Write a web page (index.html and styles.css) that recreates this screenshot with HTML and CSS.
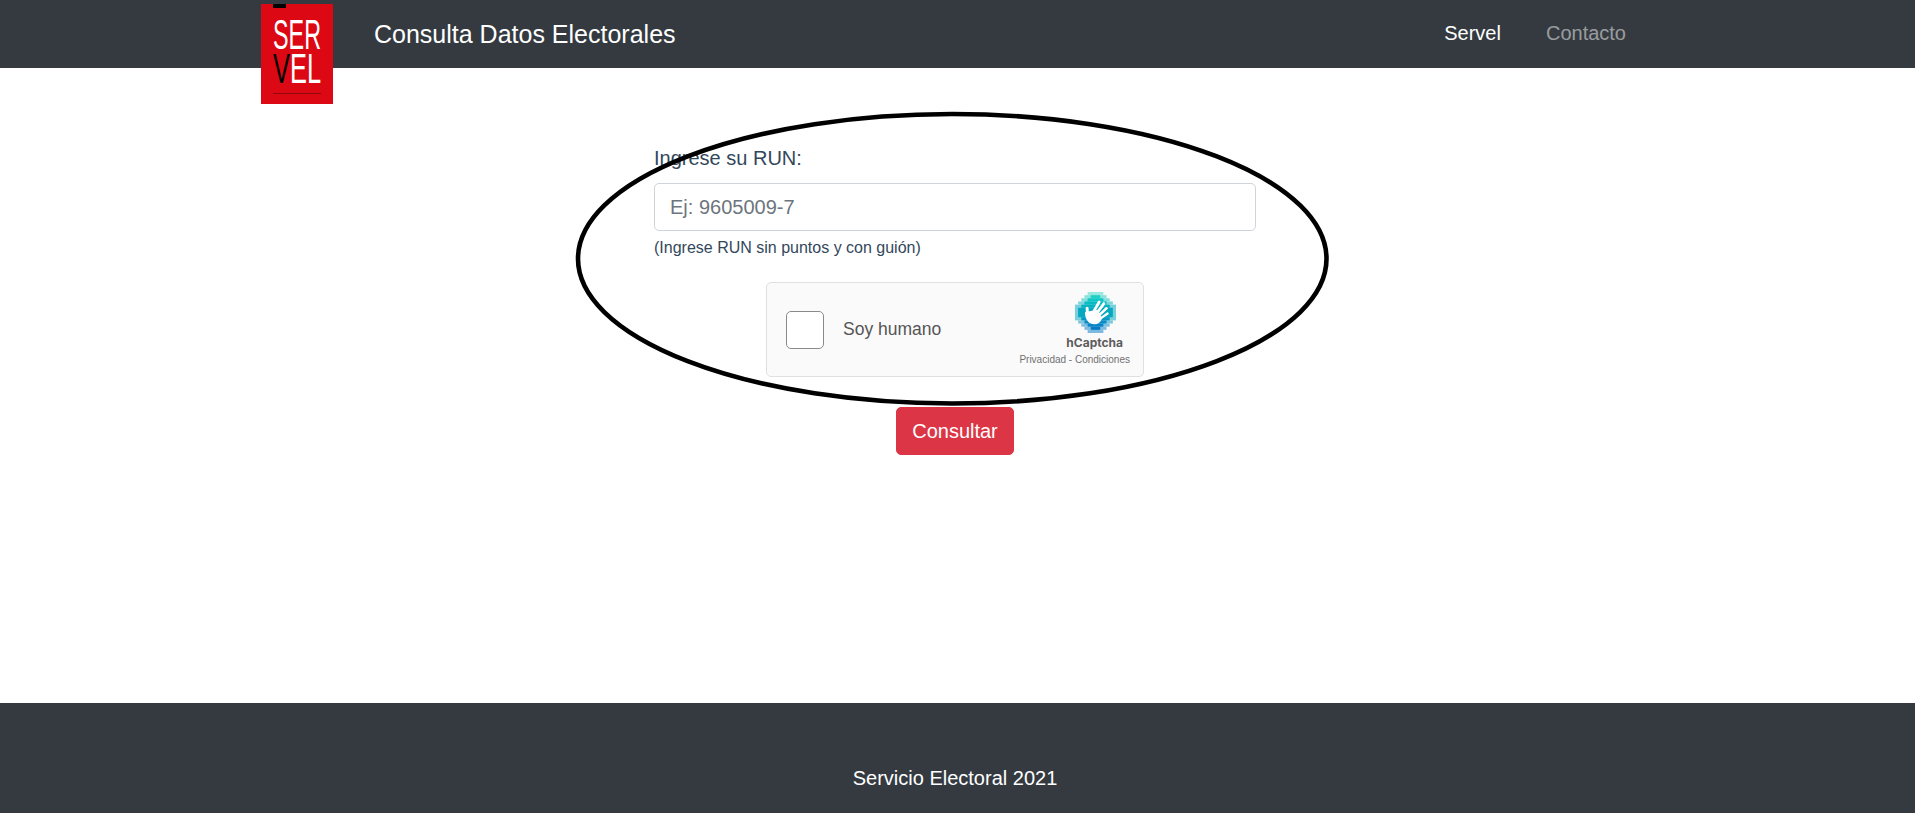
FILE: index.html
```html
<!DOCTYPE html>
<html lang="es">
<head>
  <meta charset="UTF-8">
  <title>Consulta Datos Electorales</title>
  <link rel="stylesheet" href="styles.css">
</head>
<body>
  <header class="navbar">
    <svg class="logo" viewBox="0 0 72 100" role="img" aria-label="Servel">
      <rect width="72" height="100" fill="#dc0814"/>
      <rect x="12" width="13" height="4" fill="#000"/>
      <text class="logo-text" transform="translate(12 45) scale(.543 1)" font-size="43" fill="#fff">SER</text>
      <text class="logo-text" transform="translate(12 79) scale(.605 1)" font-size="42" fill="#fff"><tspan fill="#000">V</tspan>EL</text>
      <rect x="12" y="89" width="48" height="1" fill="#8f0a10"/>
    </svg>
    <a class="brand" href="#">Consulta Datos Electorales</a>
    <nav class="nav-links">
      <a class="nav-link active" href="#">Servel</a>
      <a class="nav-link" href="#">Contacto</a>
    </nav>
  </header>

  <main class="content">
    <form class="run-form">
      <label class="run-label" for="run">Ingrese su RUN:</label>
      <input class="run-input" id="run" type="text" placeholder="Ej: 9605009-7">
      <small class="run-help">(Ingrese RUN sin puntos y con guión)</small>
      <div class="captcha">
        <span class="captcha-box"></span>
        <span class="captcha-label">Soy humano</span>
        <div class="captcha-brand">
          <svg class="captcha-logo" viewBox="0 0 39 39" aria-hidden="true">
            <g opacity=".55">
              <rect x="12" y="0" width="15" height="3" fill="#4fdcc8"/>
              <rect x="9" y="3" width="21" height="3" fill="#2fd0c4"/>
              <rect x="6" y="6" width="27" height="3" fill="#1cc6c4"/>
              <rect x="3" y="9" width="33" height="3" fill="#12bcc4"/>
              <rect x="0" y="12" width="39" height="15" fill="#10afc2"/>
              <rect x="3" y="27" width="33" height="3" fill="#1a9cc8"/>
              <rect x="6" y="30" width="27" height="3" fill="#1a90cc"/>
              <rect x="9" y="33" width="21" height="3" fill="#1a88cc"/>
              <rect x="12" y="36" width="15" height="3" fill="#1a84cc"/>
            </g>
            <rect x="15" y="3" width="9" height="3" fill="#1fd0c4"/>
            <rect x="12" y="6" width="15" height="3" fill="#10c6c4"/>
            <rect x="9" y="9" width="21" height="3" fill="#06bcc4"/>
            <rect x="6" y="12" width="27" height="3" fill="#04b2c2"/>
            <rect x="3" y="15" width="33" height="9" fill="#04a8c0"/>
            <rect x="6" y="24" width="27" height="3" fill="#0698c4"/>
            <rect x="9" y="27" width="21" height="3" fill="#0a8cc8"/>
            <rect x="12" y="30" width="15" height="3" fill="#0a84c8"/>
            <rect x="15" y="33" width="9" height="3" fill="#0a7cc4"/>
            <g stroke="#fff" stroke-linecap="round" fill="none">
              <path d="M17 20 L23 9.5" stroke-width="2.6"/>
              <path d="M20 21 L27.5 11" stroke-width="2.6"/>
              <path d="M22 23 L30 15.5" stroke-width="2.4"/>
              <path d="M23 26 L31 20.5" stroke-width="2.2"/>
              <path d="M12 22 L11.5 15.5" stroke-width="2.8"/>
            </g>
            <path d="M9.5 19 L22 17 L25.5 25 C24.5 30 19 32 15 30 C11 28 9.5 24 9.5 19 Z" fill="#fff"/>
          </svg>
          <span class="captcha-name">hCaptcha</span>
          <span class="captcha-terms">Privacidad - Condiciones</span>
        </div>
      </div>
      <button class="btn-submit" type="button">Consultar</button>
    </form>
    <svg class="circle-mark" viewBox="0 0 760 300" aria-hidden="true">
      <ellipse cx="377.25" cy="147.75" rx="374.25" ry="144.75" fill="none" stroke="#000" stroke-width="4.6"/>
    </svg>
  </main>

  <footer class="footer">Servicio Electoral 2021</footer>
</body>
</html>
```

FILE: styles.css
```css
html, body {
  height: 100%;
  margin: 0;
  padding: 0;
}
body {
  min-height: 100vh;
  display: flex;
  flex-direction: column;
  background: #fff;
  font-family: "Liberation Sans", Arial, sans-serif;
  font-size: 20px;
  line-height: 30px;
  color: #33475b;
  overflow: hidden;
}
.navbar {
  height: 68px;
  flex: none;
  display: flex;
  align-items: center;
  padding: 0 289px 0 261px;
  background: #343a40;
}
.logo {
  width: 72px;
  height: 100px;
  align-self: flex-start;
  margin-top: 4px;
  flex: none;
}
.logo-text {
  font-family: "Liberation Sans", Arial, sans-serif;
}
.brand {
  margin-left: 41px;
  font-size: 25px;
  color: #fff;
  text-decoration: none;
}
.nav-links {
  margin-left: auto;
  padding-bottom: 2px;
  display: flex;
  gap: 45px;
}
.nav-link {
  color: rgba(255, 255, 255, 0.5);
  text-decoration: none;
}
.nav-link.active {
  color: #fff;
}
.content {
  flex: 1;
  position: relative;
  display: flex;
  justify-content: center;
  padding: 75px 5px 0 0;
}
.run-form {
  width: 602px;
  display: flex;
  flex-direction: column;
}
.run-label {
  margin-bottom: 10px;
}
.run-input {
  height: 48px;
  box-sizing: border-box;
  padding: 0 15px;
  border: 1px solid #ced4da;
  border-radius: 5px;
  font: inherit;
  color: #495057;
}
.run-input::placeholder {
  color: #6c757d;
  opacity: 1;
}
.run-help {
  margin-top: 5px;
  font-size: 16px;
  line-height: 24px;
}
.captcha {
  width: 378px;
  height: 95px;
  box-sizing: border-box;
  margin: 22px auto 0;
  padding: 0 13px 0 19px;
  display: flex;
  align-items: center;
  background: #fafafa;
  border: 1px solid #e0e0e0;
  border-radius: 5px;
  color: #555;
}
.captcha-box {
  width: 38px;
  height: 38px;
  box-sizing: border-box;
  background: #fff;
  border: 1px solid #8a8a8a;
  border-radius: 5px;
  flex: none;
}
.captcha-label {
  margin-left: 19px;
  margin-bottom: 2px;
  font-size: 17.5px;
}
.captcha-brand {
  margin-left: auto;
  display: flex;
  flex-direction: column;
  align-items: flex-end;
}
.captcha-logo {
  width: 41px;
  height: 41px;
  display: block;
  margin-right: 14px;
}
.captcha-name {
  margin-top: 1px;
  margin-right: 7px;
  font-family: "Inter", "Liberation Sans", sans-serif;
  font-size: 12px;
  font-weight: 700;
  line-height: 18px;
  color: #5c5c5c;
}
.captcha-terms {
  margin-top: 1px;
  font-size: 10px;
  line-height: 14px;
  color: #707070;
}
.btn-submit {
  margin: 30px auto 0;
  width: 118px;
  height: 48px;
  background: #dc3545;
  color: #fff;
  border: 1px solid #dc3545;
  border-radius: 5px;
  font: inherit;
}
/* trazo dibujado encima del formulario */
.circle-mark {
  position: absolute;
  left: 575px;
  top: 43px;
  width: 760px;
  height: 300px;
  pointer-events: none;
}
.footer {
  height: 110px;
  flex: none;
  box-sizing: border-box;
  padding: 60px 5px 0 0;
  background: #343a40;
  color: #fff;
  text-align: center;
}
```
